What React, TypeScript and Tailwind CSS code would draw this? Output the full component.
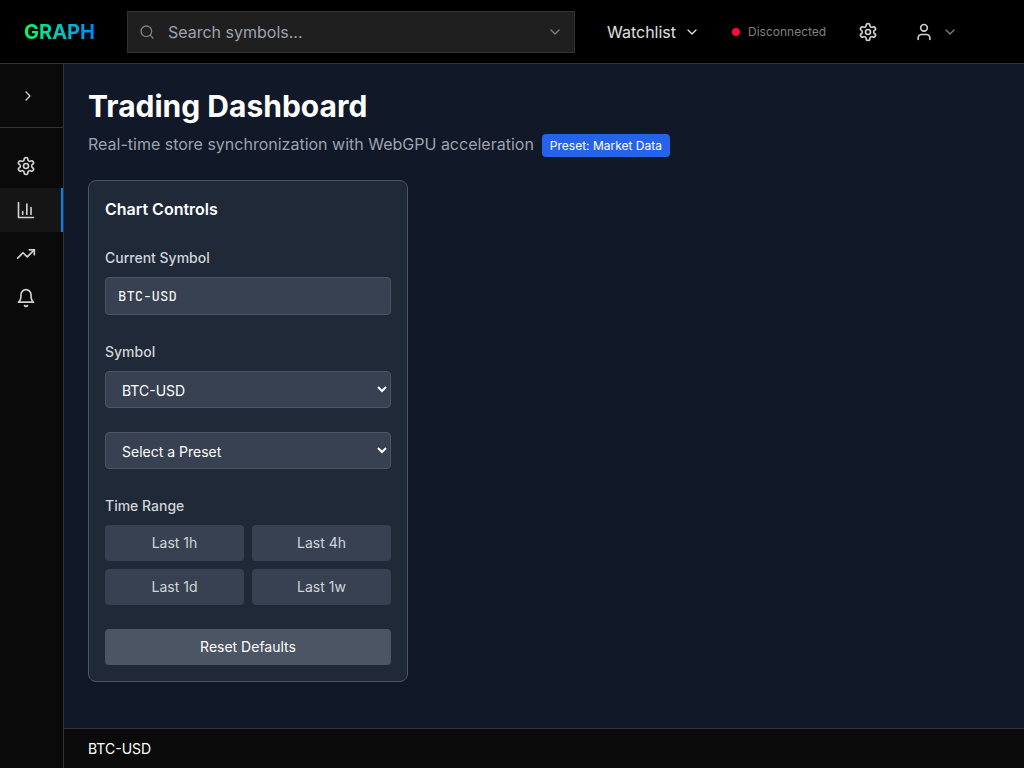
import { useState, type ReactNode } from 'react';
import { ChevronDown, ChevronRight, Search, TrendingUp, User } from 'lucide-react';

function Icon({ children }: { children: ReactNode }) {
  return (
    <svg
      width="20"
      height="20"
      viewBox="0 0 24 24"
      fill="none"
      stroke="currentColor"
      strokeWidth="2"
      strokeLinecap="round"
      strokeLinejoin="round"
      aria-hidden="true"
    >
      {children}
    </svg>
  );
}

function SettingsIcon() {
  return (
    <Icon>
      <path d="M12.22 2h-.44a2 2 0 0 0-2 2v.18a2 2 0 0 1-1 1.73l-.43.25a2 2 0 0 1-2 0l-.15-.08a2 2 0 0 0-2.73.73l-.22.38a2 2 0 0 0 .73 2.73l.15.1a2 2 0 0 1 1 1.72v.51a2 2 0 0 1-1 1.74l-.15.09a2 2 0 0 0-.73 2.73l.22.38a2 2 0 0 0 2.73.73l.15-.08a2 2 0 0 1 2 0l.43.25a2 2 0 0 1 1 1.73V20a2 2 0 0 0 2 2h.44a2 2 0 0 0 2-2v-.18a2 2 0 0 1 1-1.73l.43-.25a2 2 0 0 1 2 0l.15.08a2 2 0 0 0 2.73-.73l.22-.39a2 2 0 0 0-.73-2.73l-.15-.08a2 2 0 0 1-1-1.74v-.5a2 2 0 0 1 1-1.74l.15-.09a2 2 0 0 0 .73-2.73l-.22-.38a2 2 0 0 0-2.73-.73l-.15.08a2 2 0 0 1-2 0l-.43-.25a2 2 0 0 1-1-1.73V4a2 2 0 0 0-2-2z" />
      <circle cx="12" cy="12" r="3" />
    </Icon>
  );
}

function ChartIcon() {
  return (
    <Icon>
      <path d="M3 3v18h18" />
      <path d="M18 17V9" />
      <path d="M13 17V5" />
      <path d="M8 17v-3" />
    </Icon>
  );
}

function TrendIcon() {
  return <TrendingUp size={20} />;
}

function BellIcon() {
  return (
    <Icon>
      <path d="M6 8a6 6 0 0 1 12 0c0 7 3 9 3 9H3s3-2 3-9" />
      <path d="M10.3 21a1.94 1.94 0 0 0 3.4 0" />
    </Icon>
  );
}

const navItems = [
  { label: 'Settings', Glyph: SettingsIcon },
  { label: 'Charts', Glyph: ChartIcon },
  { label: 'Trends', Glyph: TrendIcon },
  { label: 'Alerts', Glyph: BellIcon },
];

const symbols = ['BTC-USD', 'ETH-USD', 'SOL-USD'];
const presets = ['Market Data', 'Candlestick'];
const ranges = ['Last 1h', 'Last 4h', 'Last 1d', 'Last 1w'];

const labelClass = 'text-sm font-medium text-[#d1d5db]';
const selectClass =
  'block h-[37px] w-full rounded-sm border border-[#4b5563] bg-[#374151] px-3 pt-0.5 text-sm text-white';

function Header() {
  return (
    <header className="flex h-16 shrink-0 items-center border-b border-[#333333] bg-black px-6">
      <div className="bg-linear-to-r from-[#00ff41] to-[#0080ff] bg-clip-text text-xl font-bold text-transparent">
        GRAPH
      </div>
      <div className="relative ml-8 w-full max-w-md">
        <Search size={16} className="absolute top-[13px] left-3 text-[#808080]" />
        <input
          type="text"
          aria-label="Search symbols"
          placeholder="Search symbols..."
          className="block h-[42px] w-full border border-[#333333] bg-[#1f1f1f] px-10 text-base text-white placeholder:text-[#9ca3af]"
        />
        <ChevronDown size={16} className="absolute top-[13px] right-3 text-[#808080]" />
      </div>
      <button className="ml-8 flex items-center gap-2 text-base text-[#e0e0e0]">
        Watchlist
        <ChevronDown size={16} />
      </button>
      <div className="ml-8 flex items-center gap-2 text-xs text-[#808080]">
        <span className="size-2 rounded-full bg-[#ff0a3c]" />
        Disconnected
      </div>
      <button aria-label="Settings" className="ml-8 text-[#d0d0d0]">
        <SettingsIcon />
      </button>
      <button aria-label="Account" className="ml-9 flex items-center gap-2 text-[#d0d0d0]">
        <User size={20} />
        <ChevronDown size={16} className="text-[#808080]" />
      </button>
    </header>
  );
}

function Sidebar() {
  return (
    <aside className="w-16 shrink-0 border-r border-[#333333] bg-[#0a0a0a] text-[#d0d0d0]">
      <div className="flex h-16 items-center border-b border-[#333333] px-5">
        <button aria-label="Expand sidebar">
          <ChevronRight size={16} />
        </button>
      </div>
      <nav className="flex flex-col pt-4">
        {navItems.map(({ label, Glyph }) => (
          <button
            key={label}
            aria-label={label}
            className={
              label === 'Charts'
                ? 'flex h-11 items-center border-r-2 border-[#0080ff] bg-[#151515] px-4'
                : 'flex h-11 items-center px-4'
            }
          >
            <Glyph />
          </button>
        ))}
      </nav>
    </aside>
  );
}

function ChartControls() {
  const [symbol, setSymbol] = useState('BTC-USD');
  const [preset, setPreset] = useState('');

  return (
    <section className="mt-6 flex w-80 flex-col gap-6 rounded-lg border border-[#4b5563] bg-[#1f2937] p-4">
      <h2 className="text-base font-semibold text-white">Chart Controls</h2>
      <div>
        <div className="mb-2">
          <label htmlFor="current-symbol" className={labelClass}>
            Current Symbol
          </label>
        </div>
        <input
          id="current-symbol"
          readOnly
          value={symbol}
          className="block w-full rounded-sm border border-[#4b5563] bg-[#374151] px-3 py-2 font-['JetBrains_Mono','Liberation_Mono',monospace] text-sm text-white"
        />
      </div>
      <div>
        <div className="mb-2">
          <label htmlFor="symbol" className={labelClass}>
            Symbol
          </label>
        </div>
        <select
          id="symbol"
          value={symbol}
          onChange={(e) => setSymbol(e.target.value)}
          className={selectClass}
        >
          {symbols.map((s) => (
            <option key={s}>{s}</option>
          ))}
        </select>
      </div>
      <select
        aria-label="Preset"
        value={preset}
        onChange={(e) => setPreset(e.target.value)}
        className={selectClass}
      >
        <option value="">Select a Preset</option>
        {presets.map((p) => (
          <option key={p}>{p}</option>
        ))}
      </select>
      <div role="group" aria-labelledby="time-range">
        <div className="mb-2">
          <span id="time-range" className={labelClass}>
            Time Range
          </span>
        </div>
        <div className="grid grid-cols-2 gap-2">
          {ranges.map((range) => (
            <button key={range} className="rounded-sm bg-[#374151] px-3 py-2 text-sm text-[#d1d5db]">
              {range}
            </button>
          ))}
        </div>
      </div>
      <button className="rounded-sm bg-[#4b5563] px-4 py-2 text-sm text-white">
        Reset Defaults
      </button>
    </section>
  );
}

export default function App() {
  return (
    <div className="flex h-screen flex-col bg-black font-['Inter',sans-serif]">
      <Header />
      <div className="flex min-h-0 flex-1">
        <Sidebar />
        <div className="flex min-w-0 flex-1 flex-col">
          <main className="min-h-0 flex-1 overflow-auto bg-[#111827] p-6">
            <h1 className="text-3xl font-bold text-white">Trading Dashboard</h1>
            <p className="mt-2 text-base text-[#9ca3af]">
              Real-time store synchronization with WebGPU acceleration
              <span className="ml-2 rounded-sm bg-[#2563eb] px-2 py-1 text-xs text-white">
                Preset: Market Data
              </span>
            </p>
            <ChartControls />
          </main>
          <footer className="flex h-10 shrink-0 items-center border-t border-[#333333] bg-[#0a0a0a] px-6 text-sm text-white">
            BTC-USD
          </footer>
        </div>
      </div>
    </div>
  );
}
